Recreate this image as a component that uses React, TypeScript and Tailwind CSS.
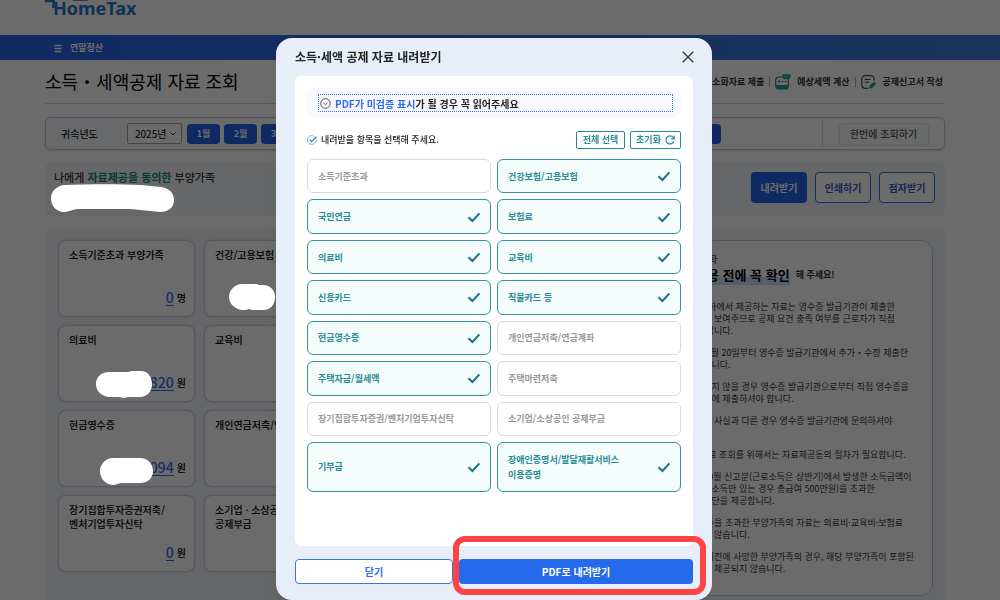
import { useState } from 'react'

interface Amount {
  title: string
  value?: string
  unit?: string
}

const amounts: Amount[] = [
  { title: '소득기준초과 부양가족', value: '0', unit: '명' },
  { title: '건강/고용보험' },
  { title: '의료비', value: '820', unit: '원' },
  { title: '교육비' },
  { title: '현금영수증', value: '094', unit: '원' },
  { title: '개인연금저축/연' },
  { title: '장기집합투자증권저축/\n벤처기업투자신탁', value: '0', unit: '원' },
  { title: '소기업 · 소상공\n공제부금' }
]

const notices = [
  '· 소화에서 제공하는 자료는 영수증 발급기관이 제출한\n대로 보여주므로 공제 요건 충족 여부를 근로자가 직접\n야 합니다.',
  '년 1월 20일부터 영수증 발급기관에서 추가・수정 제출한\n공합니다.',
  '회되지 않을 경우 영수증 발급기관으로부터 직접 영수증을\n회사에 제출하셔야 합니다.',
  '료가 사실과 다른 경우 영수증 발급기관에 문의하셔야\n ',
  '  자료 조회를 위해서는 자료제공동의 절차가 필요합니다.',
  '년10월 신고분(근로소득은 상반기)에서 발생한 소득금액이\n근로소득만 있는 경우 총급여 500만원)을 초과한\n족명단을 제공합니다.',
  ' 기준을 초과한 부양가족의 자료는 의료비·교육비·보험료\n되지 않습니다.',
  '도 이전에 사망한 부양가족의 경우, 해당 부양가족이 포함된\n료는 제공되지 않습니다.'
]

const items = [
  '소득기준초과',
  '건강보험/고용보험',
  '국민연금',
  '보험료',
  '의료비',
  '교육비',
  '신용카드',
  '직불카드 등',
  '현금영수증',
  '개인연금저축/연금계좌',
  '주택자금/월세액',
  '주택마련저축',
  '장기집합투자증권/벤처기업투자신탁',
  '소기업/소상공인 공제부금',
  '기부금',
  '장애인증명서/발달재활서비스\n이용증명'
]

const initiallySelected = [1, 2, 3, 4, 5, 6, 7, 8, 10, 14, 15]

const months = ['1월', '2월', '3월']

function CalculatorIcon() {
  return (
    <svg className="size-4" viewBox="0 0 16 16" fill="none">
      <rect x="0.7" y="3" width="12.6" height="12" rx="3" stroke="#4b5563" strokeWidth="1.1" />
      <path d="M0.8 11h12.4v1a3 3 0 0 1-3 3H3.8a3 3 0 0 1-3-3z" fill="#14a89c" />
      <path d="M3 7.5h2M4 6.5v2M6.6 7.5h1.8M9.6 7.5h1.8" stroke="#374151" />
      <path d="M8.5 0.3h5.7a1.3 1.3 0 0 1 1.3 1.3v1.9a1.3 1.3 0 0 1-1.3 1.3h-3.4L9.3 6V4.8h-.8a1.3 1.3 0 0 1-1.3-1.3V1.6A1.3 1.3 0 0 1 8.5.3z" fill="#14a89c" />
      <path d="M9.3 2.6h4.4" stroke="#a7e5e0" strokeDasharray="1 0.8" />
    </svg>
  )
}

function FormIcon() {
  return (
    <svg className="size-4" viewBox="0 0 16 16" fill="none">
      <path d="M13 6.5V5a3.4 3.4 0 0 0-3.4-3.4H4.2A3.4 3.4 0 0 0 .8 5v6a3.4 3.4 0 0 0 2.9 3.3h3.5" stroke="#4b5563" strokeWidth="1.2" />
      <path d="M3.6 5.5h6.2M3.6 8.2h4.4" stroke="#4b5563" />
      <path d="M8 14.4l.8-2.8 4-3.8 2.3 2.3-4.1 3.8z" fill="#14a89c" />
    </svg>
  )
}

function CheckMark() {
  return (
    <svg className="h-3 w-3.5 shrink-0" viewBox="0 0 14 12" fill="none">
      <path d="M1.5 6.2L5.4 10L12.4 2.4" stroke="#1c7381" strokeWidth="2" />
    </svg>
  )
}

function AmountCard({ title, value, unit }: Amount) {
  return (
    <article className="flex h-[77px] flex-col justify-between rounded-lg border border-[#ccd2e4] bg-white pt-[7px] pr-2 pb-2.5 pl-2.5 shadow-[0_0_2px_rgba(100,120,180,0.3)]">
      <h3 className="whitespace-pre text-[10px] leading-[14px] font-medium text-black">{title}</h3>
      {value && (
        <p className="flex items-center justify-end gap-[3px] text-[10px] font-medium leading-4 text-black">
          <a href="#detail" className="border-b border-[#2f6df0] text-[14px] leading-4 text-[#2f6df0]">
            {value}
          </a>
          {unit}
        </p>
      )}
    </article>
  )
}

function Page() {
  return (
    <div className="flex h-screen flex-col overflow-hidden bg-white">
      <header className="w-full shrink-0">
        <div className="h-[35px] pr-2.5">
          <div className="mx-auto flex max-w-[900px] items-start">
            <a href="#home" aria-label="HomeTax" className="relative flex items-start pl-2 text-[#2878cc]">
              <svg className="absolute top-0 left-0 h-4 w-12" viewBox="0 0 48 16" fill="none">
                <path d="M0 1h10M8.5 0v8" stroke="#2878cc" strokeWidth="2.4" />
                <path d="M28 0h15" stroke="#8390a3" strokeWidth="2" />
              </svg>
              <span className="font-['Noto_Sans','Open_Sans',sans-serif] text-[18px] leading-4 font-bold">HomeTax</span>
            </a>
          </div>
        </div>
        <nav className="h-[25px] bg-linear-to-r from-[#2a62ea] to-[#3f7de0] pr-2.5">
          <div className="mx-auto flex h-full max-w-[900px] items-center gap-[7px] px-2 text-white">
            <button type="button" aria-label="메뉴">
              <svg className="size-2.5" viewBox="0 0 10 10" stroke="currentColor" strokeWidth="1.3">
                <path d="M1.5 2.5h7M1.5 5.5h7M1.5 8.5h7" />
              </svg>
            </button>
            <a href="#year-end" className="text-[9px] font-bold">연말정산</a>
          </div>
        </nav>
      </header>

      <main className="flex min-h-0 flex-1 flex-col pr-2.5">
        <div className="mx-auto flex w-full max-w-[900px] flex-1 flex-col">
          <div className="flex h-11 shrink-0 items-center justify-between border-b border-[#d3d6dd]">
            <h1 className="text-[18px] font-normal text-black">소득・세액공제 자료 조회</h1>
            <div className="flex items-center pr-0.5 text-[9px] font-semibold text-[#333]">
              <a href="#submit">소화자료 제출</a>
              <span className="mx-[5px] h-2.5 w-px bg-[#aaa]" />
              <a href="#estimate" className="flex items-center gap-1.5">
                <CalculatorIcon />
                예상세액 계산
              </a>
              <span className="mx-[5px] h-2.5 w-px bg-[#aaa]" />
              <a href="#report" className="flex items-center gap-1.5">
                <FormIcon />
                공제신고서 작성
              </a>
            </div>
          </div>

          <form className="mt-[13px] flex h-[33px] shrink-0 overflow-hidden rounded-md border border-[#b9c3dd] shadow-sm">
            <label htmlFor="year" className="flex w-[76px] items-center bg-[#f7f9fd] pl-[15px] text-[10px] font-medium text-[#222]">
              귀속년도
            </label>
            <div className="flex flex-1 items-center gap-1 pl-[5px]">
              <div className="relative mr-px">
                <select id="year" className="block h-[21px] w-[55px] appearance-none rounded-xs border border-[#a5a5a5] bg-white pl-[7px] text-[10px] leading-[18px] text-black">
                  <option>2025년</option>
                </select>
                <svg className="pointer-events-none absolute top-2 right-1.5 size-1.5" viewBox="0 0 6 6" fill="none" stroke="#333">
                  <path d="M0.5 1.5L3 4L5.5 1.5" />
                </svg>
              </div>
              {months.map(month => (
                <button key={month} type="button" className="h-5 w-[33px] rounded-sm bg-[#2563eb] text-[9px] font-semibold text-white">
                  {month}
                </button>
              ))}
              <button type="button" aria-label="전체" className="mr-[101px] h-5 flex-1 rounded-sm bg-[#2563eb]" />
            </div>
            <div className="flex w-[122px] items-center justify-center border-l border-[#dde1ea]">
              <button type="button" className="h-[22px] w-[90px] rounded-sm border border-[#e2e6ee] bg-[#f8f9fb] text-[10px] font-medium text-[#555] shadow-sm">
                한번에 조회하기
              </button>
            </div>
          </form>

          <section className="mt-3 flex h-[54px] shrink-0 items-start justify-between rounded-md bg-[#f2f5fa] py-2.5 pr-2.5 pl-[9px]">
            <p className="text-[11px] leading-[10px] font-medium text-[#333]">
              나에게 <strong className="font-bold text-[#158a8a]">자료제공을 동의한</strong> 부양가족
            </p>
            <div className="flex gap-2 text-[10px] font-semibold">
              <button type="button" className="h-[31px] w-14 rounded-sm bg-[#2563eb] text-white">내려받기</button>
              <button type="button" className="h-[31px] w-14 rounded-sm border border-[#2f6df0] bg-white text-[#2f5fd0]">인쇄하기</button>
              <button type="button" className="h-[31px] w-14 rounded-sm border border-[#2f6df0] bg-white text-[#2f5fd0]">점자받기</button>
            </div>
          </section>

          <section className="mt-3 flex min-h-0 flex-1 items-start justify-between rounded-t-md bg-[#f2f5fa] py-3 pr-3 pl-[13px]">
            <div className="grid w-[283px] shrink-0 grid-cols-2 gap-x-[9px] gap-y-2">
              {amounts.map(amount => (
                <AmountCard key={amount.title} {...amount} />
              ))}
            </div>
            <aside className="w-[287px] rounded-xl border border-[#bcc6e0] bg-white pt-3 pb-5 pl-12 whitespace-pre text-[#333]">
              <p className="pl-1 text-[10px] leading-3">소화</p>
              <h2 className="mb-4 flex items-center gap-1.5 text-[9px] leading-5 font-semibold">
                <span className="bg-linear-to-b from-transparent from-60% to-[#cfe0ff] to-60% text-[13px] font-bold text-black">이용 전에 꼭 확인</span>
                해 주세요!
              </h2>
              <ul className="flex flex-col gap-2.5 text-[9px] leading-3">
                {notices.map(notice => (
                  <li key={notice}>{notice}</li>
                ))}
              </ul>
            </aside>
          </section>
        </div>
      </main>
    </div>
  )
}

// Opaque strokes that hide personal details
function Redactions() {
  return (
    <svg className="pointer-events-none absolute top-0 left-0 h-[500px] w-[280px]" viewBox="0 0 280 500" fill="#fff">
      <path d="M64 185C90 184 120 184 141 185L161 187C169 188 174 193 174 200C174 208 168 212 160 212C147 211 137 209 125 209H77C71 210 68 212 63 212C56 211 51 206 51 198C51 191 57 186 64 185Z" />
      <path d="M242 284H257L259 285H263C271 285 275 291 275 297C275 304 271 310 263 310H252L249 309L246 310H242C235 309 229 304 229 297C229 290 235 284 242 284Z" />
      <path d="M109 372H128L132 371H141C148 371 152 377 152 384C152 391 148 396 141 397H128L124 398L119 397H109C101 396 96 391 96 384C96 377 101 372 109 372Z" />
      <path d="M113 458H140C148 458 153 464 153 471C153 478 148 483 140 483H121L114 485C106 485 100 479 100 471C100 464 106 458 113 458Z" />
    </svg>
  )
}

function DownloadDialog() {
  const [selected, setSelected] = useState<number[]>(initiallySelected)

  const toggle = (index: number) => {
    setSelected(prev => (prev.includes(index) ? prev.filter(i => i !== index) : [...prev, index]))
  }

  return (
    <div role="dialog" aria-labelledby="dialog-title" className="flex w-[436px] flex-col rounded-2xl bg-[#e8eef9] px-[19px] pb-4 shadow-xl">
      <div className="flex h-[38px] shrink-0 items-center justify-between">
        <h2 id="dialog-title" className="text-[12px] font-semibold text-[#222]">소득·세액 공제 자료 내려받기</h2>
        <button type="button" aria-label="창 닫기" className="-mr-px">
          <svg className="size-3" viewBox="0 0 12 12" stroke="#333" strokeWidth="1.3">
            <path d="M0.7 0.7L11.3 11.3M11.3 0.7L0.7 11.3" />
          </svg>
        </button>
      </div>

      <div className="flex-1 rounded-md bg-white p-3">
        <div className="rounded-lg bg-[#f7f9fe] py-1.5 pr-2 pl-[11px]">
          <a href="#guide" className="flex h-[18px] items-center gap-1 border border-dotted border-[#3b6ff0] px-px text-[10px] font-semibold text-[#222]">
            <svg className="size-[11px]" viewBox="0 0 11 11" fill="none" stroke="#444">
              <circle cx="5.5" cy="5.5" r="4.8" strokeWidth="0.9" />
              <path d="M3.5 4.9L5.5 6.6L7.5 4.9" strokeWidth="0.9" />
            </svg>
            <span>
              <strong className="font-bold text-[#2f6bf0]">PDF가 미검증 표시</strong>가 될 경우 꼭 읽어주세요
            </span>
          </a>
        </div>

        <div className="mt-[13px] flex items-center justify-between">
          <p className="flex items-center gap-1 text-[9px] font-medium text-[#222]">
            <svg className="size-2.5" viewBox="0 0 10 10" fill="none">
              <path d="M8.9 3.4A4.4 4.4 0 1 1 7.2 1.3" stroke="#6d9fe8" strokeWidth="0.8" />
              <path d="M2.8 4.6L4.8 6.6L9.3 1.6" stroke="#158a96" strokeWidth="1.3" />
            </svg>
            내려받을 항목을 선택해 주세요.
          </p>
          <div className="flex gap-[5px] text-[9px] font-semibold text-[#2b8b97]">
            <button type="button" onClick={() => setSelected(items.map((_, i) => i))} className="h-[18px] w-[49px] rounded-xs border border-[#238a96] bg-white">
              전체 선택
            </button>
            <button type="button" onClick={() => setSelected([])} className="flex h-[18px] w-[51px] items-center justify-center gap-1 rounded-xs border border-[#238a96] bg-white">
              초기화
              <svg className="size-2.5" viewBox="0 0 10 10" fill="none" stroke="currentColor" strokeWidth="1.2">
                <path d="M8.8 6.2A4 4 0 1 1 8.2 2.5L9 3.6" />
                <path d="M9.2 0.6V3.8H6" />
              </svg>
            </button>
          </div>
        </div>

        <div className="mt-2.5 grid min-h-[333px] grid-cols-2 grid-rows-[repeat(7,1fr)_50px] gap-1.5">
          {items.map((item, index) => {
            const checked = selected.includes(index)
            return (
              <label
                key={item}
                className={`
                  relative flex cursor-pointer items-center justify-between rounded-md border pr-[9px] pl-2.5
                  text-[9px] leading-[15px] font-semibold whitespace-pre
                  ${checked ? 'border-[#3592a0] bg-[#f3fcfb] text-[#2b8b97]' : 'border-[#d9d9d9] bg-white text-[#999999]'}
                `}
              >
                <input type="checkbox" checked={checked} onChange={() => toggle(index)} className="sr-only" />
                {item}
                {checked && <CheckMark />}
              </label>
            )
          })}
        </div>
      </div>

      <div className="mt-[13px] flex gap-1.5 text-[10px] font-semibold">
        <button type="button" className="h-[25px] flex-2 rounded-sm border border-[#3b74e8] bg-white text-[#2f6bf0]">닫기</button>
        <div className="relative flex-3">
          <button type="button" className="h-[25px] w-full rounded-sm bg-[#256aea] text-white">PDF로 내려받기</button>
          <span className="pointer-events-none absolute -top-[23px] -right-[13px] -bottom-[11px] -left-1.5 rounded-xl border-6 border-[#fc4444]" />
        </div>
      </div>
    </div>
  )
}

export default function App() {
  return (
    <div lang="ko" className="font-['Noto_Sans_CJK_KR',sans-serif]">
      <Page />
      <div className="fixed inset-0 flex justify-center bg-black/58 pt-[38px] pr-3">
        <Redactions />
        <DownloadDialog />
      </div>
    </div>
  )
}
